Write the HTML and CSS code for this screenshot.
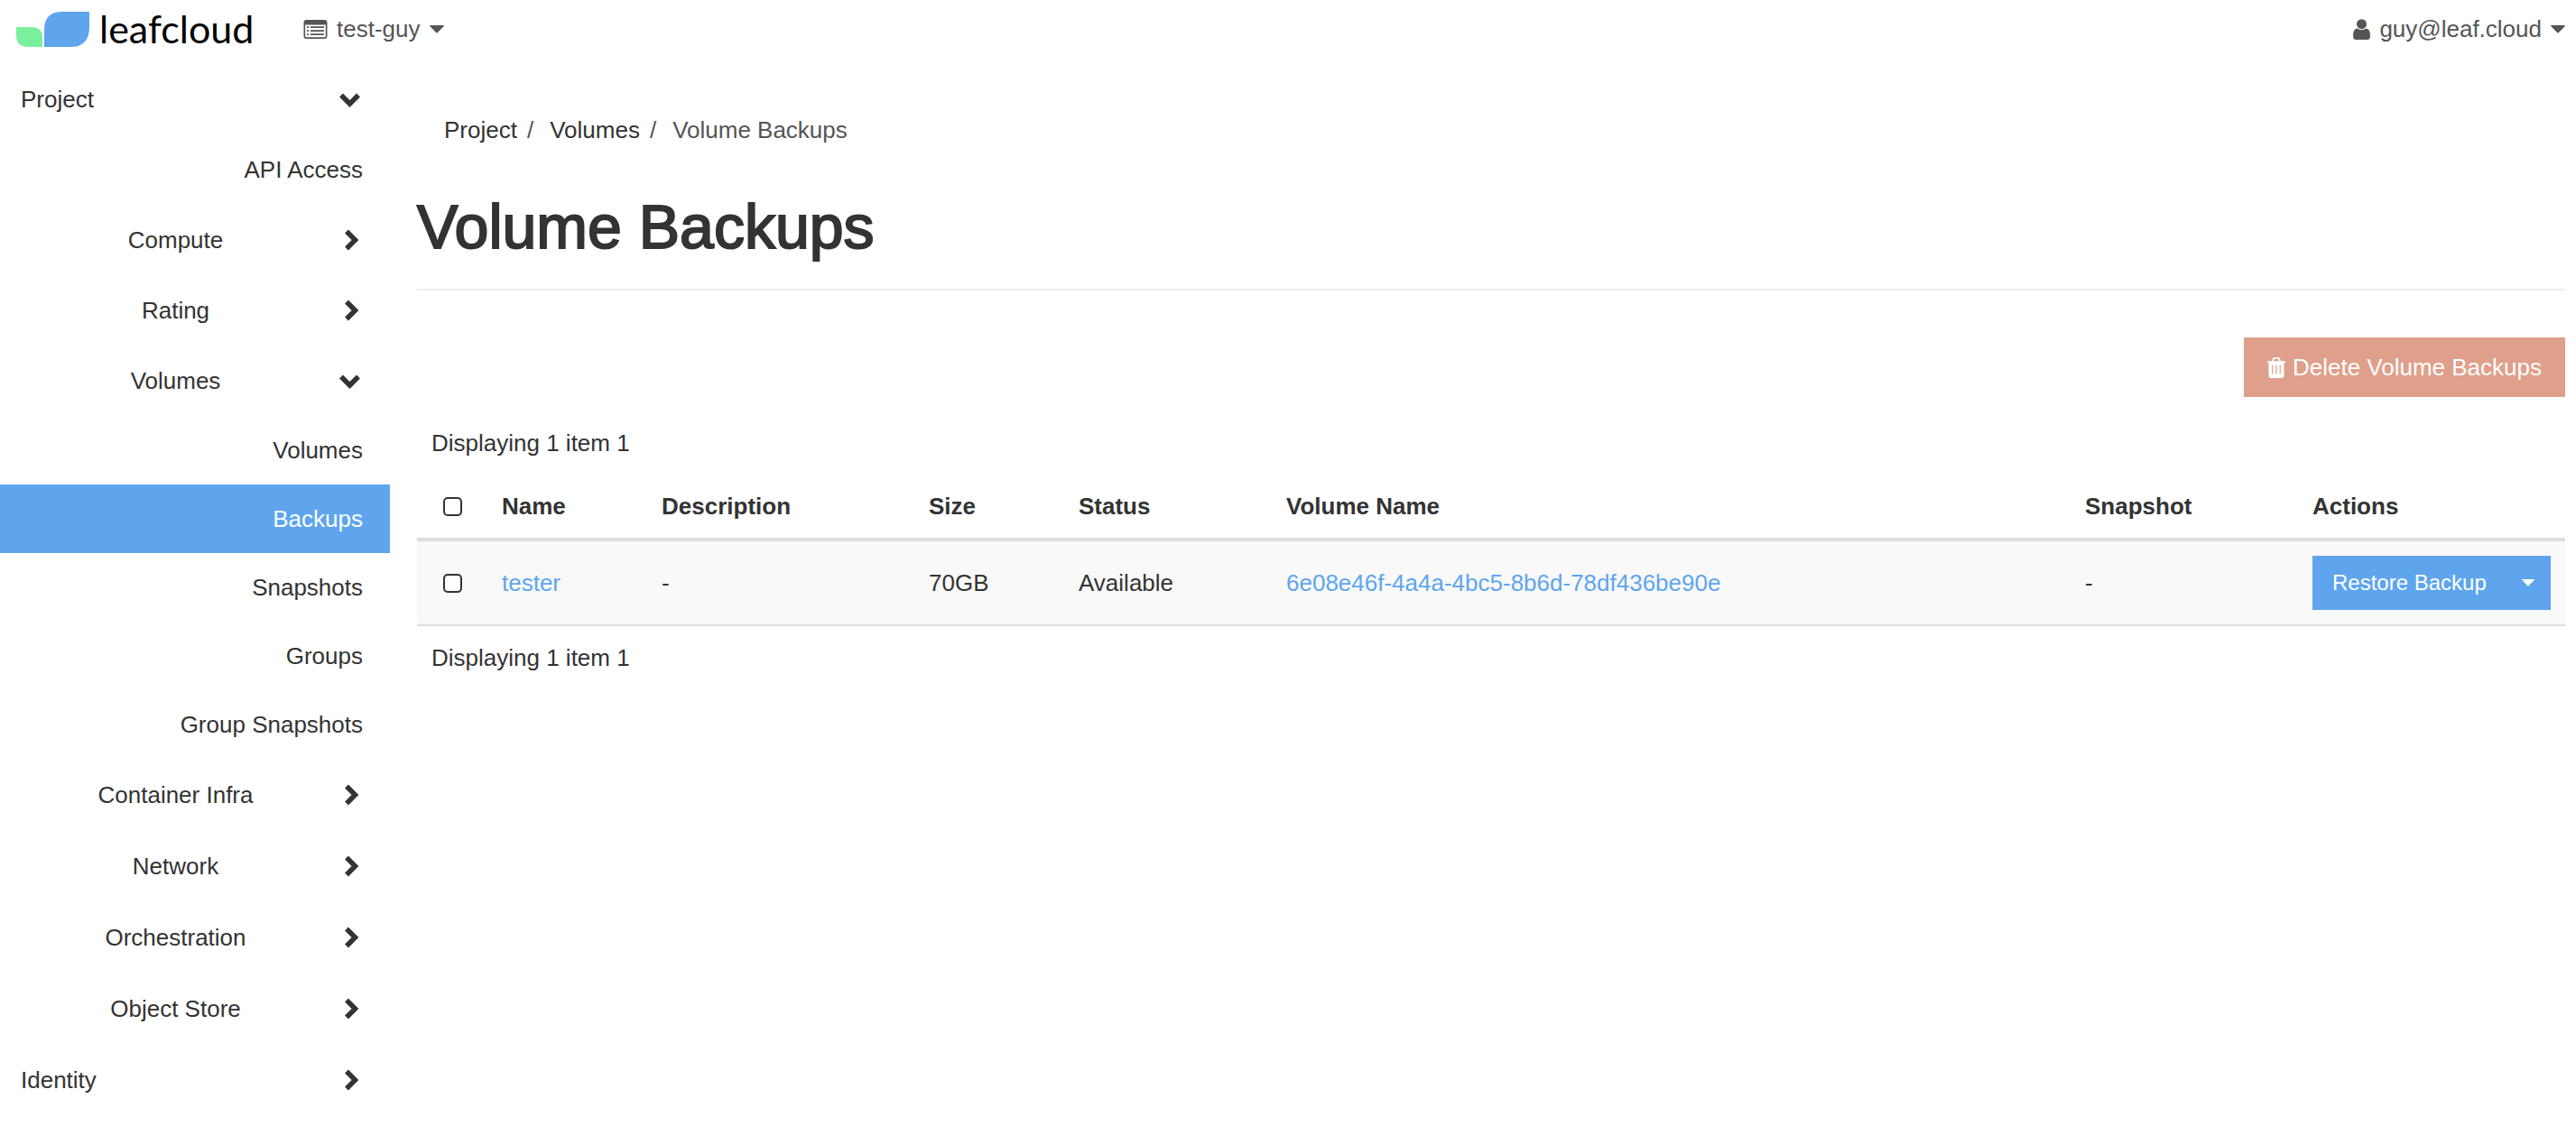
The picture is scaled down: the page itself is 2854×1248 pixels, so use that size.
FILE: index.html
```html
<!DOCTYPE html>
<html lang="en">
<head>
<meta charset="utf-8">
<title>Volume Backups</title>
<link rel="stylesheet" href="styles.css">
</head>
<body>
<svg class="sprite" aria-hidden="true">
  <symbol id="chevron-right" viewBox="0 0 26 26"><path d="M10 3.500 19.500 13 10 22.500" fill="none" stroke="currentColor" stroke-width="5.500"/></symbol>
  <symbol id="chevron-down" viewBox="0 0 26 26"><path d="M4 8.500 13.500 18 23 8.500" fill="none" stroke="currentColor" stroke-width="5.500"/></symbol>
  <symbol id="caret" viewBox="0 0 16 9"><path d="M.8 0h14.400q1 .2.3 1.200L8.700 8.200q-.7.6-1.400 0L.5 1.200Q-.2.200.8 0z" fill="currentColor"/></symbol>
</svg>
<header class="topbar">
  <a class="brand" href="#">
    <svg class="brand-mark" viewBox="0 0 81 39" aria-hidden="true">
      <path d="M0 17h17q12 0 12 12v10H13Q0 39 0 26z" fill="#7af09c"/>
      <path d="M51 0h30v17q0 22-21 22H31V20Q31 0 51 0z" fill="#5ea5ee"/>
    </svg>
    <span class="brand-name">leafcloud</span>
  </a>
  <button class="menu" type="button">
    <svg class="icon-list" viewBox="0 0 26 21" aria-hidden="true">
      <path d="M3 0h20q3 0 3 3v15q0 3-3 3H3q-3 0-3-3V3Q0 0 3 0zM1.700 5.500V18q0 1.300 1.300 1.300h20q1.300 0 1.300-1.300V5.500z" fill="currentColor" fill-rule="evenodd"/>
      <path d="M3.500 8.200h2M3.500 12.200h2M3.500 16.200h2M7.500 8.200h15M7.500 12.200h15M7.500 16.200h15" stroke="currentColor" stroke-width="1.700"/>
    </svg>
    <span>test-guy</span>
    <svg class="caret"><use href="#caret"/></svg>
  </button>
  <button class="menu menu-user" type="button">
    <svg class="icon-user" viewBox="0 0 19 23" aria-hidden="true">
      <circle cx="9.500" cy="5.700" r="5.500" fill="currentColor"/>
      <path d="M4.500 10.500Q9.500 14 14.500 10.500 19 11 19 18.500 19 23 15.500 23h-12Q0 23 0 18.500 0 11 4.500 10.500z" fill="currentColor"/>
    </svg>
    <span>guy@leaf.cloud</span>
    <svg class="caret"><use href="#caret"/></svg>
  </button>
</header>
<div class="page">
  <nav class="sidebar" aria-label="Main">
    <a class="row row-top" href="#"><span>Project</span><svg class="chevron"><use href="#chevron-down"/></svg></a>
    <a class="leaf leaf-panel" href="#">API Access</a>
    <a class="row" href="#"><span>Compute</span><svg class="chevron"><use href="#chevron-right"/></svg></a>
    <a class="row" href="#"><span>Rating</span><svg class="chevron"><use href="#chevron-right"/></svg></a>
    <a class="row" href="#"><span>Volumes</span><svg class="chevron"><use href="#chevron-down"/></svg></a>
    <div class="leaves">
      <a class="leaf" href="#">Volumes</a>
      <a class="leaf leaf-active" href="#" aria-current="page">Backups</a>
      <a class="leaf" href="#">Snapshots</a>
      <a class="leaf" href="#">Groups</a>
      <a class="leaf" href="#">Group Snapshots</a>
    </div>
    <a class="row" href="#"><span>Container Infra</span><svg class="chevron"><use href="#chevron-right"/></svg></a>
    <a class="row" href="#"><span>Network</span><svg class="chevron"><use href="#chevron-right"/></svg></a>
    <a class="row" href="#"><span>Orchestration</span><svg class="chevron"><use href="#chevron-right"/></svg></a>
    <a class="row" href="#"><span>Object Store</span><svg class="chevron"><use href="#chevron-right"/></svg></a>
    <a class="row row-top" href="#"><span>Identity</span><svg class="chevron"><use href="#chevron-right"/></svg></a>
  </nav>
  <main class="content">
    <ol class="breadcrumb">
      <li><a href="#">Project</a></li>
      <li><a href="#">Volumes</a></li>
      <li class="current">Volume Backups</li>
    </ol>
    <h1 class="title">Volume Backups</h1>
    <div class="toolbar">
      <button class="btn-delete" type="button">
        <svg class="icon-trash" viewBox="0 0 20 23" aria-hidden="true">
          <path d="M0 4.300h5L6.200 1.300Q6.700 0 8 0h4q1.300 0 1.800 1.300L15 4.300h5V6h-1.500v14q0 3-2.700 3H4.200q-2.700 0-2.700-3V6H0zM7 4.300h6l-.8-2.300q-.2-.4-.6-.4H8.400q-.4 0-.6.400zM5.200 8.500v10h1.200v-10zm4.200 0v10h1.200v-10zm4.200 0v10h1.200v-10z" fill="currentColor" fill-rule="evenodd"/>
        </svg>
        <span>Delete Volume Backups</span>
      </button>
    </div>
    <p class="count count-top">Displaying 1 item 1</p>
    <table class="table">
      <colgroup><col class="c-check"><col class="c-name"><col class="c-desc"><col class="c-size"><col class="c-status"><col><col class="c-snap"><col class="c-actions"></colgroup>
      <thead>
        <tr>
          <th class="check"><input type="checkbox" aria-label="Select all"></th>
          <th>Name</th><th>Description</th><th>Size</th><th>Status</th><th>Volume Name</th><th>Snapshot</th><th>Actions</th>
        </tr>
      </thead>
      <tbody>
        <tr>
          <td class="check"><input type="checkbox" aria-label="Select tester"></td>
          <td><a href="#">tester</a></td>
          <td>-</td>
          <td>70GB</td>
          <td>Available</td>
          <td><a href="#">6e08e46f-4a4a-4bc5-8b6d-78df436be90e</a></td>
          <td>-</td>
          <td>
            <div class="split">
              <button class="btn-restore" type="button">Restore Backup</button>
              <button class="btn-more" type="button" aria-label="More actions"><svg class="caret caret-small"><use href="#caret"/></svg></button>
            </div>
          </td>
        </tr>
      </tbody>
    </table>
    <p class="count">Displaying 1 item 1</p>
  </main>
</div>
</body>
</html>
```
FILE: styles.css
```css
* { box-sizing: border-box; }

body {
  margin: 0;
  background: #fff;
  color: #333;
  font: 26px/38px "Liberation Sans", Arial, sans-serif;
}

a { color: #5ea5ee; text-decoration: none; }
button { margin: 0; border: 0; font: inherit; cursor: pointer; }
svg { display: block; flex: none; }
.sprite { position: absolute; width: 0; height: 0; }

/* Top bar */
.topbar {
  display: flex;
  align-items: center;
  height: 64px;
  padding: 0 12px 0 18px;
}
.brand { display: flex; align-items: center; gap: 11px; color: #000; width: 318px; }
.brand-mark { width: 81px; height: 39px; }
.brand-name { font: 43px/44px Lato, sans-serif; }
.menu {
  display: flex;
  align-items: center;
  gap: 10px;
  padding: 0;
  background: none;
  color: #555;
}
.menu-user { margin-left: auto; }
.icon-list { width: 27px; height: 21px; }
.icon-user { width: 19px; height: 23px; }
.caret { width: 16px; height: 9px; }
.caret-small { width: 14px; height: 8px; }

/* Layout */
.page { display: flex; padding-top: 7px; }
.sidebar { flex: none; width: 432px; }
.content { flex: 1; min-width: 0; padding: 54px 12px 0 30px; }

/* Sidebar */
.row {
  display: flex;
  align-items: center;
  gap: 8px;
  height: 78px;
  padding: 0 32px 0 23px;
  color: #333;
  text-align: center;
}
.leaves ~ .row { height: 79px; }
.row span { flex: 1; }
.row-top { text-align: left; }
.chevron { width: 26px; height: 26px; }
.leaf {
  display: block;
  padding: 19px 30px;
  color: #333;
  text-align: right;
}
.leaf-panel { padding-block: 20px; }
.leaf-active { background: #5ea5ee; color: #fff; }

/* Heading */
.breadcrumb {
  display: flex;
  margin: 0;
  padding: 0 30px;
  list-style: none;
}
.breadcrumb a { color: #333; }
.breadcrumb li + li::before { content: "/"; padding: 0 18px 0 11px; color: #555; }
.current { color: #555; }
.title {
  margin: 0;
  padding: 48px 0 29px;
  border-bottom: 2px solid #eee;
  font-size: 68px;
  font-weight: 400;
  line-height: 80px;
  -webkit-text-stroke: 2px #333;
}

/* Table */
.toolbar { display: flex; justify-content: flex-end; padding-top: 52px; }
.btn-delete {
  display: flex;
  align-items: center;
  gap: 8px;
  padding: 14px 26px;
  background: #dfa08b;
  color: #fff;
}
.icon-trash { width: 20px; height: 23px; }
.count { margin: 0; padding: 16px; }
.count-top { padding-top: 32px; }
.table { width: 100%; table-layout: fixed; border-collapse: separate; border-spacing: 0; }
.c-check { width: 78px; }
.c-name { width: 177px; }
.c-desc { width: 296px; }
.c-size { width: 166px; }
.c-status { width: 230px; }
.c-snap { width: 252px; }
.c-actions { width: 296px; }
.table th, .table td { padding: 16px; text-align: left; vertical-align: middle; }
.table th { border-bottom: 4px solid #ddd; }
.table td { background: #f9f9f9; border-bottom: 2px solid #ddd; }
.table .check { padding-left: 29px; }
.check input {
  appearance: none;
  display: block;
  width: 21px;
  height: 21px;
  margin: 0;
  border: 2px solid #333;
  border-radius: 5px;
  background: #fff;
}
.split { display: flex; }
.btn-restore, .btn-more { height: 60px; background: #5ea5ee; color: #fff; }
.btn-restore { padding: 0 22px; font-size: 24px; white-space: nowrap; }
.btn-more { display: flex; flex: 1; align-items: center; justify-content: flex-end; padding: 0 18px 0 0; }
```
